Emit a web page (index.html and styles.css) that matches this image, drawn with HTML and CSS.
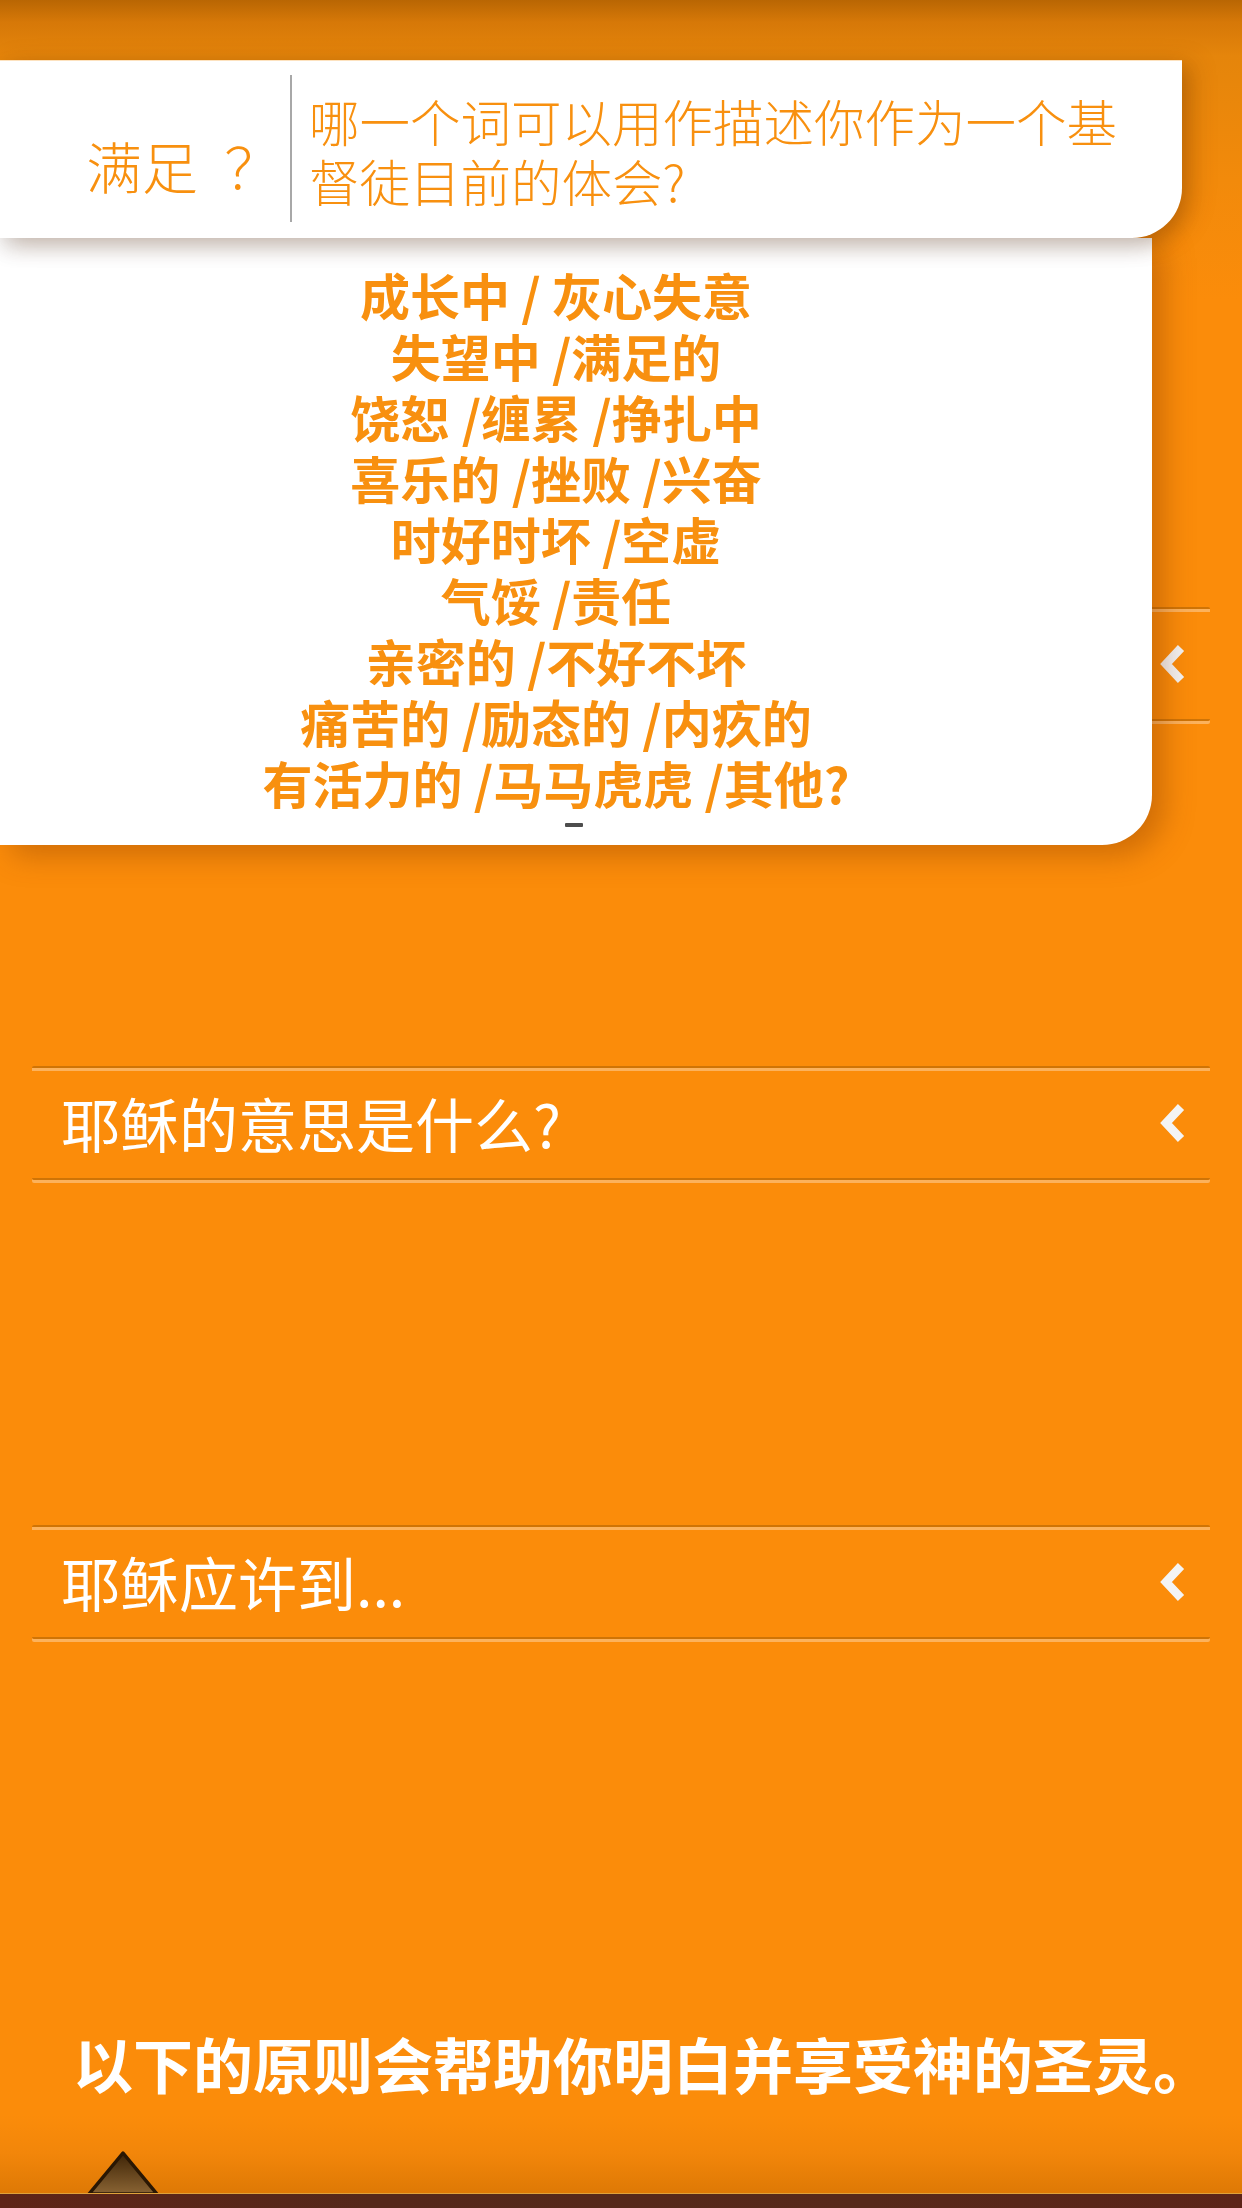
FILE: index.html
```html
<!DOCTYPE html>
<html lang="zh-CN">
<head>
<meta charset="utf-8">
<title>满足？</title>
<link rel="stylesheet" href="styles.css">
</head>
<body>
<main class="accordion">
  <div class="row">
    <span class="row-title"></span>
    <svg class="chev" viewBox="0 0 26 40" width="26" height="40"><polyline points="21,4 6,20 21,36"/></svg>
  </div>
  <div class="row">
    <span class="row-title">耶稣的意思是什么?</span>
    <svg class="chev" viewBox="0 0 26 40" width="26" height="40"><polyline points="21,4 6,20 21,36"/></svg>
  </div>
  <div class="row">
    <span class="row-title">耶稣应许到...</span>
    <svg class="chev" viewBox="0 0 26 40" width="26" height="40"><polyline points="21,4 6,20 21,36"/></svg>
  </div>
</main>

<footer class="footer">
  <p class="footer-text">以下的原则会帮助你明白并享受神的圣灵。</p>
  <div class="tabbar">
    <svg class="indicator" viewBox="0 0 74 44" width="74" height="44">
      <defs>
        <linearGradient id="tri" x1="0" y1="0" x2="0" y2="1">
          <stop offset="0" stop-color="#3e2406"/>
          <stop offset="1" stop-color="#8a6434"/>
        </linearGradient>
      </defs>
      <polygon points="37,3 71,44 3,44" fill="url(#tri)" stroke="#2a1703" stroke-width="3.5" stroke-linejoin="round"/>
    </svg>
    <div class="bar"></div>
  </div>
</footer>

<section class="popup">
  <div class="card-head">
    <div class="label">满足 ？</div>
    <div class="divider"></div>
    <div class="question">哪一个词可以用作描述你作为一个基督徒目前的体会?</div>
  </div>
  <div class="card-list">
    <p class="words">成长中 / 灰心失意<br>失望中 /满足的<br>饶恕 /缠累 /挣扎中<br>喜乐的 /挫败 /兴奋<br>时好时坏 /空虚<br>气馁 /责任<br>亲密的 /不好不坏<br>痛苦的 /励态的 /内疚的<br>有活力的 /马马虎虎 /其他?</p>
    <span class="dash"></span>
  </div>
</section>
</body>
</html>
```

FILE: styles.css
```css
html, body {
  margin: 0;
  padding: 0;
}

body {
  position: relative;
  width: 1242px;
  height: 2208px;
  overflow: hidden;
  display: flex;
  flex-direction: column;
  font-family: "Noto Sans CJK SC", "Noto Sans", sans-serif;
  background: linear-gradient(to bottom,
    #b96603 0px,
    #d67808 22px,
    #e5850b 56px,
    #f28a0b 180px,
    #fb8c0a 300px,
    #fb8c0a 100%);
}

/* ---------- accordion rows ---------- */
.accordion {
  display: flex;
  flex-direction: column;
  gap: 345px;
  padding: 607px 32px 0;
}

.row {
  height: 110px;
  display: flex;
  align-items: center;
  justify-content: space-between;
  padding: 0 24px 0 29px;
  border-top: 2px solid #cf7406;
  border-bottom: 2px solid #cf7406;
  box-shadow: inset 0 3px 0 #fcb25c, 0 3px 0 #fcb25c;
  border-radius: 2px;
}

.row-title {
  color: #ffffff;
  font-size: 59px;
  line-height: 70px;
  font-weight: 400;
  white-space: nowrap;
}

.chev {
  display: block;
  flex: none;
}

.chev polyline {
  fill: none;
  stroke: #f4f4f4;
  stroke-width: 8.5;
  stroke-linecap: butt;
  stroke-linejoin: miter;
}

/* ---------- footer ---------- */
.footer {
  margin-top: auto;
  display: flex;
  flex-direction: column;
}

.footer-text {
  margin: 0;
  padding-left: 44px;
  text-align: center;
  color: #ffffff;
  font-size: 60px;
  line-height: 80px;
  font-weight: 700;
  white-space: nowrap;
}

.tabbar {
  height: 105px;
  display: flex;
  flex-direction: column;
  justify-content: flex-end;
  background: linear-gradient(to bottom, #fb8c0a 0px, #fb8c0a 12px, #f2860a 50px, #de7905 90px);
}

.indicator {
  display: block;
  margin-left: 86px;
  margin-bottom: -1px;
}

.bar {
  height: 14px;
  background: linear-gradient(to right, #5e2417, #55281a 30%, #57291a 70%, #5c2418);
  border-top: 1px solid #e0a23a;
}

/* ---------- overlay popup ---------- */
.popup {
  position: absolute;
  left: 0;
  top: 60px;
  width: 1182px;
}

.card-head {
  position: relative;
  z-index: 2;
  display: flex;
  width: 1182px;
  height: 178px;
  background: #ffffff;
  border-top: 1px solid #fde2bf;
  box-sizing: border-box;
  border-radius: 0 0 50px 0;
  box-shadow: 0 10px 22px rgba(0, 0, 0, 0.13), 10px 4px 24px rgba(120, 50, 0, 0.28);
  color: #f8900f;
}

.label {
  width: 290px;
  box-sizing: border-box;
  padding: 74px 0 0 86px;
  font-size: 56px;
  line-height: 60px;
  font-weight: 300;
  white-space: nowrap;
  word-spacing: 14px;
}

.divider {
  width: 2px;
  background: #a8a8a8;
  margin: 14px 0 16px;
}

.question {
  align-self: center;
  width: 850px;
  padding-left: 17px;
  font-size: 50.5px;
  line-height: 60px;
  font-weight: 300;
}

.card-list {
  position: relative;
  z-index: 1;
  width: 1152px;
  height: 607px;
  box-sizing: border-box;
  padding: 26px 40px 0 0;
  background: #ffffff;
  border-radius: 0 0 50px 0;
  box-shadow: 12px 10px 30px rgba(120, 50, 0, 0.35);
  display: flex;
  flex-direction: column;
  align-items: center;
}

.words {
  margin: 0;
  text-align: center;
  color: #f8900f;
  font-size: 50px;
  line-height: 61px;
  font-weight: 700;
}

.dash {
  display: block;
  width: 18px;
  height: 4px;
  margin-top: 10px;
  margin-left: 36px;
  background: #4d4d4d;
  border-radius: 1px;
}
```
